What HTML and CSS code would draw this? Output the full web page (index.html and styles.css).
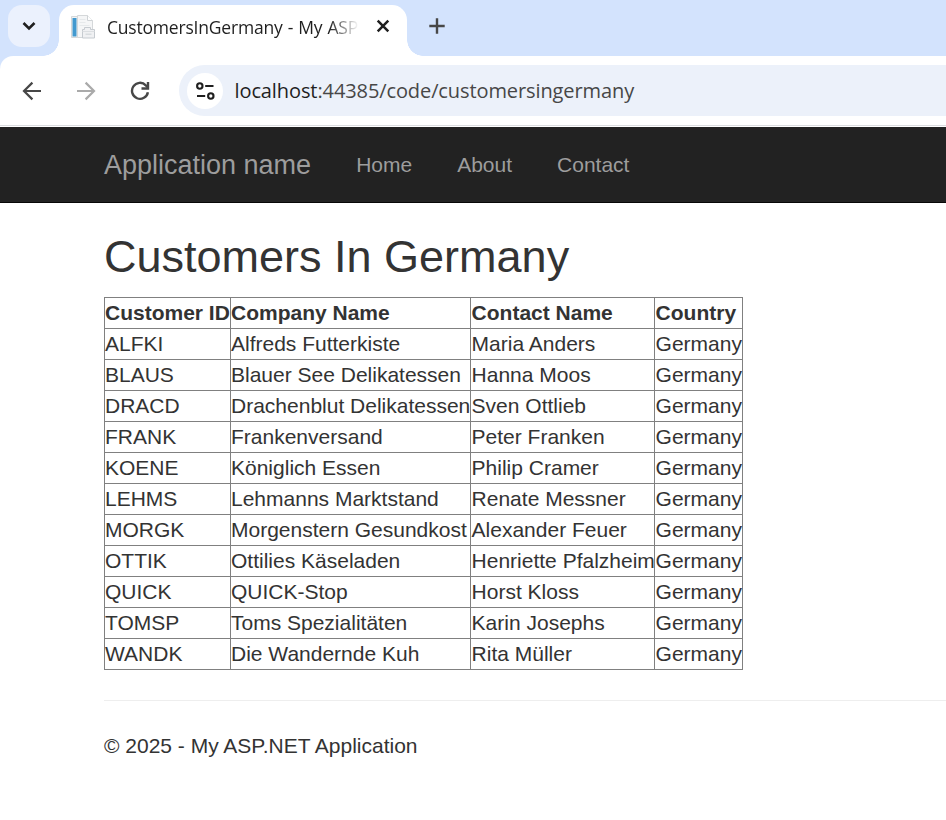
FILE: index.html
```html
<!DOCTYPE html>
<html lang="en">
<head>
<meta charset="utf-8">
<title>CustomersInGermany - My ASP.NET Application</title>
<link rel="stylesheet" href="styles.css">
</head>
<body>
<header class="browser">
  <div class="tab-strip">
    <button class="tab-search" aria-label="Search tabs">
      <svg width="42" height="42" viewBox="0 0 42 42"><path d="M15.500 18l5.500 5.500 5.500-5.500" fill="none" stroke="#1f1f1f" stroke-width="2.600"/></svg>
    </button>
    <div class="tab">
      <svg class="favicon" width="24" height="24" viewBox="0 0 24 24">
        <path d="M.5 1.500h6v21h-6z" fill="#f1f3f4" stroke="#d5d8da"/>
        <path d="M1.500 3h4v18.500h-4z" fill="#4299cf"/>
        <path d="M6.500.5h10l5 5v17h-15z" fill="#f5f6f7" stroke="#d5d8da"/>
        <path d="M16.500.5v5h5" fill="#fff" stroke="#cfd3d6"/>
        <path d="M8.500 4.500h6M8.500 7.500h6M8.500 10.500h10" stroke="#e6e9eb"/>
        <path d="M11.500 14.500h2v-2h6v2h4v8.500h-12z" fill="#f0f1f3" stroke="#c6cbd0"/>
        <path d="M11.500 16.500h12" stroke="#dcdfe2"/>
        <path d="M14.500 18.500h6v1.500h-6z" fill="#d8dcdf"/>
      </svg>
      <span class="tab-title">CustomersInGermany - My ASP.</span>
      <svg class="close" width="14" height="14" viewBox="0 0 14 14"><path d="M1.700 1.700l10.600 10.600M12.300 1.700L1.700 12.300" stroke="#1f1f1f" stroke-width="2.500"/></svg>
    </div>
    <svg class="new-tab" width="16" height="16" viewBox="0 0 16 16"><path d="M8 .3v15.400M.3 8h15.400" stroke="#474747" stroke-width="2.400"/></svg>
  </div>
  <div class="toolbar">
    <svg class="nav-icon" width="20" height="20" viewBox="0 0 20 20"><path d="M19 10H2.200M10.400 1.600L2 10l8.400 8.400" fill="none" stroke="#474747" stroke-width="2.200"/></svg>
    <svg class="nav-icon" width="20" height="20" viewBox="0 0 20 20"><path d="M1 10h16.800M9.600 1.600L18 10l-8.400 8.400" fill="none" stroke="#aaa" stroke-width="2.200"/></svg>
    <svg class="nav-icon" width="20" height="20" viewBox="0 0 20 20"><path d="M17.900 11.200A8 8 0 1 1 15.800 4.300L18 6.500" fill="none" stroke="#474747" stroke-width="2.400"/><path d="M18 1v6.500h-6.500" fill="none" stroke="#474747" stroke-width="2.400"/></svg>
    <div class="address">
      <span class="site-info">
        <svg width="20" height="20" viewBox="0 0 20 20" fill="none" stroke="#1f1f1f" stroke-width="2.100"><circle cx="4.800" cy="5" r="2.700"/><path d="M10.200 5H18.500M2 15h8.200"/><circle cx="15.800" cy="15" r="2.700"/></svg>
      </span>
      <span class="url"><span class="host">localhost</span>:44385/code/customersingermany</span>
    </div>
  </div>
</header>
<nav class="navbar">
  <a class="brand">Application name</a>
  <a class="link">Home</a>
  <a class="link">About</a>
  <a class="link">Contact</a>
</nav>
<main class="content">
  <h1>Customers In Germany</h1>
  <table>
    <colgroup><col class="id"><col class="company"><col class="contact"><col class="country"></colgroup>
    <tr><th>Customer ID</th><th>Company Name</th><th>Contact Name</th><th>Country</th></tr>
    <tr><td>ALFKI</td><td>Alfreds Futterkiste</td><td>Maria Anders</td><td>Germany</td></tr>
    <tr><td>BLAUS</td><td>Blauer See Delikatessen</td><td>Hanna Moos</td><td>Germany</td></tr>
    <tr><td>DRACD</td><td>Drachenblut Delikatessen</td><td>Sven Ottlieb</td><td>Germany</td></tr>
    <tr><td>FRANK</td><td>Frankenversand</td><td>Peter Franken</td><td>Germany</td></tr>
    <tr><td>KOENE</td><td>Königlich Essen</td><td>Philip Cramer</td><td>Germany</td></tr>
    <tr><td>LEHMS</td><td>Lehmanns Marktstand</td><td>Renate Messner</td><td>Germany</td></tr>
    <tr><td>MORGK</td><td>Morgenstern Gesundkost</td><td>Alexander Feuer</td><td>Germany</td></tr>
    <tr><td>OTTIK</td><td>Ottilies Käseladen</td><td>Henriette Pfalzheim</td><td>Germany</td></tr>
    <tr><td>QUICK</td><td>QUICK-Stop</td><td>Horst Kloss</td><td>Germany</td></tr>
    <tr><td>TOMSP</td><td>Toms Spezialitäten</td><td>Karin Josephs</td><td>Germany</td></tr>
    <tr><td>WANDK</td><td>Die Wandernde Kuh</td><td>Rita Müller</td><td>Germany</td></tr>
  </table>
  <hr>
  <footer>© 2025 - My ASP.NET Application</footer>
</main>
</body>
</html>
```
FILE: styles.css
```css
* { box-sizing: border-box; }
body {
  margin: 0;
  background: #fff;
  color: #333;
  font: 21px/30px "Liberation Sans", Arial, sans-serif;
  overflow: hidden;
}
svg { display: block; flex: none; }

.browser {
  height: 127px;
  background: #d3e3fd;
  font-family: "Open Sans", "Noto Sans", sans-serif;
}
.tab-strip {
  display: flex;
  height: 56px;
  padding: 5px 0 0 8px;
}
.tab-search {
  width: 42px;
  height: 42px;
  padding: 0;
  border: 0;
  border-radius: 14px;
  background: #ebf1fd;
}
.tab {
  position: relative;
  display: flex;
  align-items: center;
  width: 348px;
  height: 51px;
  margin-left: 9px;
  padding: 0 17px 7px 12px;
  border-radius: 15px 15px 0 0;
  background: #fff;
}
.tab::before,
.tab::after {
  content: "";
  position: absolute;
  bottom: 0;
  width: 16px;
  height: 16px;
}
.tab::before {
  left: -16px;
  background: radial-gradient(circle at 0 0, transparent 15.5px, #fff 16px);
}
.tab::after {
  right: -16px;
  background: radial-gradient(circle at 100% 0, transparent 15.5px, #fff 16px);
}
.favicon { margin-top: -1px; }
.tab-title {
  width: 252px;
  margin: 0 0 0 12px;
  white-space: nowrap;
  color: #1f1f1f;
  font-size: 17.5px;
  letter-spacing: -0.2px;
  word-spacing: 0.8px;
  -webkit-mask-image: linear-gradient(90deg, #000 222px, transparent 252px);
  mask-image: linear-gradient(90deg, #000 222px, transparent 252px);
}
.close { margin: -2px 0 0 auto; }
.new-tab { margin: 13px 0 0 22px; }

.toolbar {
  display: flex;
  align-items: center;
  height: 71px;
  padding: 0 0 2px 22px;
  border-radius: 13px 0 0 0;
  background: linear-gradient(#dadcdf, #dadcdf) 0 69px / 100% 1px no-repeat #fff;
}
.nav-icon { margin-right: 34px; }
.address {
  display: flex;
  flex: 1;
  align-items: center;
  height: 51px;
  margin-left: -5px;
  padding-left: 7.5px;
  border-radius: 26px 0 0 26px;
  background: #ecf1fa;
}
.site-info {
  display: grid;
  place-items: center;
  width: 36px;
  height: 36px;
  border-radius: 50%;
  background: #fff;
}
.url {
  margin-left: 12px;
  color: #474747;
  font-size: 20px;
  letter-spacing: -0.1px;
  white-space: nowrap;
}
.host { color: #1f1f1f; }

.navbar {
  display: flex;
  align-items: center;
  height: 76px;
  padding-left: 104px;
  border-bottom: 1px solid #080808;
  background: #222;
  color: #9d9d9d;
}
.brand { margin-right: 45px; font-size: 27px; }
.link { margin-right: 45px; }

.content { padding: 29px 0 0 104px; }
h1 {
  margin: 0 0 15px;
  font-size: 45px;
  font-weight: 400;
  line-height: 50px;
}
table {
  width: 639px;
  table-layout: fixed;
  border-collapse: collapse;
}
.id { width: 126px; }
.company { width: 240px; }
.contact { width: 184px; }
.country { width: 88px; }
th, td {
  height: 31px;
  padding: 0;
  border: 1px solid #808080;
  text-align: left;
  white-space: nowrap;
}
th:nth-child(n+3), td:nth-child(n+3) { padding-left: 0.6px; }
hr {
  height: 1px;
  margin: 30px 0;
  border: 0;
  background: #eee;
}
```
